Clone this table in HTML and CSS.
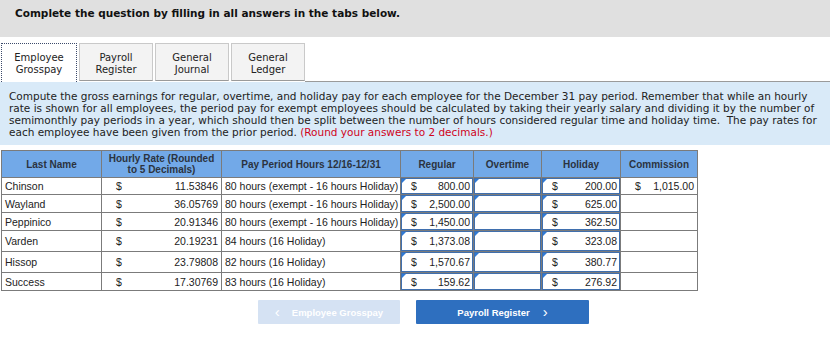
FILE: index.html
```html
<!DOCTYPE html>
<html>
<head>
<meta charset="utf-8">
<title>Employee Grosspay</title>
<link rel="stylesheet" href="styles.css">
</head>
<body>
<div class="prompt">Complete the question by filling in all answers in the tabs below.</div>

<div class="tabs">
  <div class="tab active">Employee<br>Grosspay</div>
  <div class="tab">Payroll<br>Register</div>
  <div class="tab">General<br>Journal</div>
  <div class="tab">General<br>Ledger</div>
  <div class="tab-rest"></div>
</div>

<div class="instructions">
  Compute the gross earnings for regular, overtime, and holiday pay for each employee for the December 31 pay period. Remember that while an hourly rate is shown for all employees, the period pay for exempt employees should be calculated by taking their yearly salary and dividing it by the number of semimonthly pay periods in a year, which should then be split between the number of hours considered regular time and holiday time.&nbsp; The pay rates for each employee have been given from the prior period. <span class="note">(Round your answers to 2 decimals.)</span>
</div>

<table class="grid">
  <colgroup>
    <col class="c-name"><col class="c-rate"><col class="c-hours"><col class="c-reg"><col class="c-ot"><col class="c-hol"><col class="c-com">
  </colgroup>
  <thead>
    <tr>
      <th>Last Name</th>
      <th class="two">Hourly Rate (Rounded<br>to 5 Decimals)</th>
      <th>Pay Period Hours 12/16-12/31</th>
      <th>Regular</th>
      <th>Overtime</th>
      <th>Holiday</th>
      <th>Commission</th>
    </tr>
  </thead>
  <tbody>
    <tr class="r-short">
      <td>Chinson</td>
      <td><div class="money"><span>$</span><span>11.53846</span></div></td>
      <td>80 hours (exempt - 16 hours Holiday)</td>
      <td class="in"><div class="inp money"><span>$</span><span>800.00</span></div></td>
      <td class="in"><div class="inp"></div></td>
      <td class="in"><div class="inp money"><span>$</span><span>200.00</span></div></td>
      <td><div class="money"><span>$</span><span>1,015.00</span></div></td>
    </tr>
    <tr>
      <td>Wayland</td>
      <td><div class="money"><span>$</span><span>36.05769</span></div></td>
      <td>80 hours (exempt - 16 hours Holiday)</td>
      <td class="in"><div class="inp money"><span>$</span><span>2,500.00</span></div></td>
      <td class="in"><div class="inp"></div></td>
      <td class="in"><div class="inp money"><span>$</span><span>625.00</span></div></td>
      <td></td>
    </tr>
    <tr>
      <td>Peppinico</td>
      <td><div class="money"><span>$</span><span>20.91346</span></div></td>
      <td>80 hours (exempt - 16 hours Holiday)</td>
      <td class="in"><div class="inp money"><span>$</span><span>1,450.00</span></div></td>
      <td class="in"><div class="inp"></div></td>
      <td class="in"><div class="inp money"><span>$</span><span>362.50</span></div></td>
      <td></td>
    </tr>
    <tr class="r-tall">
      <td>Varden</td>
      <td><div class="money"><span>$</span><span>20.19231</span></div></td>
      <td>84 hours (16 Holiday)</td>
      <td class="in"><div class="inp money"><span>$</span><span>1,373.08</span></div></td>
      <td class="in"><div class="inp"></div></td>
      <td class="in"><div class="inp money"><span>$</span><span>323.08</span></div></td>
      <td></td>
    </tr>
    <tr class="r-tall">
      <td>Hissop</td>
      <td><div class="money"><span>$</span><span>23.79808</span></div></td>
      <td>82 hours (16 Holiday)</td>
      <td class="in"><div class="inp money"><span>$</span><span>1,570.67</span></div></td>
      <td class="in"><div class="inp"></div></td>
      <td class="in"><div class="inp money"><span>$</span><span>380.77</span></div></td>
      <td></td>
    </tr>
    <tr>
      <td>Success</td>
      <td><div class="money"><span>$</span><span>17.30769</span></div></td>
      <td>83 hours (16 Holiday)</td>
      <td class="in"><div class="inp money"><span>$</span><span>159.62</span></div></td>
      <td class="in"><div class="inp"></div></td>
      <td class="in"><div class="inp money"><span>$</span><span>276.92</span></div></td>
      <td></td>
    </tr>
  </tbody>
</table>

<div class="nav">
  <div class="btn prev"><span class="chev">&lsaquo;</span>Employee Grosspay</div>
  <div class="btn next">Payroll Register<span class="chev">&rsaquo;</span></div>
</div>
</body>
</html>
```

FILE: styles.css
```css
html, body {
  margin: 0;
  padding: 0;
  background: #fff;
}

body {
  width: 839px;
  color: #222;
  font-family: "DejaVu Sans", Verdana, sans-serif;
}

/* grey question banner */
.prompt {
  width: 830px;
  height: 37px;
  box-sizing: border-box;
  padding: 7px 0 0 15px;
  background: #e0e0e0;
  font-size: 10.5px;
  font-weight: bold;
  color: #111;
}

/* tab strip */
.tabs {
  display: flex;
  width: 830px;
  margin-top: 6px;
  padding-left: 1px;
  box-sizing: border-box;
  height: 39px;
}

.tab {
  width: 74px;
  height: 38px;
  box-sizing: border-box;
  margin-right: 2px;
  padding-top: 8px;
  background: #f3f3f3;
  border: 1px solid #c9c9c9;
  border-bottom-color: #9a9a9a;
  text-align: center;
  font-size: 10px;
  line-height: 12px;
  color: #222;
}

.tab.active {
  width: 76px;
  height: 39px;
  background: #fff;
  border: 1px dotted #3b4a6b;
  border-bottom: none;
}

.tab-rest {
  flex: 1;
  border-bottom: 1px solid #9a9a9a;
  margin-left: -2px;
}

/* instructions panel */
.instructions {
  width: 830px;
  box-sizing: border-box;
  padding: 8px 9px 7px 9px;
  background: #d9eaf8;
  font-size: 10.5px;
  line-height: 12px;
  color: #222;
}

.note {
  color: #d0021b;
}

/* answer grid */
.grid {
  margin: 5px 0 0 1px;
  border-collapse: collapse;
  font-family: "Liberation Sans", Arial, sans-serif;
  font-size: 10.5px;
  color: #222;
  table-layout: fixed;
  width: 696px;
}

.c-name { width: 100px; }
.c-rate { width: 120px; }
.c-hours { width: 179px; }
.c-reg { width: 73px; }
.c-ot { width: 68px; }
.c-hol { width: 79px; }
.c-com { width: 77px; }

.grid th {
  height: 26px;
  padding: 0;
  background: #72a9e8;
  border: 1px solid #7b7b7b;
  font-weight: bold;
  font-size: 10px;
  line-height: 11px;
  color: #2b3340;
}

.grid td {
  height: 17px;
  padding: 0 3px;
  border: 1px solid #7b7b7b;
  white-space: nowrap;
  line-height: 12px;
}

.grid tr.r-tall td {
  height: 20px;
}

.grid tr.r-short td {
  height: 16px;
}

.money {
  display: flex;
  justify-content: space-between;
  padding-left: 11px;
}

.grid td.in {
  padding: 0;
}

.inp {
  position: relative;
  height: 100%;
  min-height: 15px;
  box-sizing: border-box;
  border: 1px solid #3f6fae;
  padding: 0 2px 0 9px;
  background: #fff;
  display: flex;
  align-items: center;
}

.inp.money {
  justify-content: space-between;
}

/* small corner marker on editable cells */
.inp::before {
  content: "";
  position: absolute;
  left: 0;
  top: 0;
  border-top: 4px solid #2f7ad6;
  border-right: 4px solid transparent;
}

/* navigation buttons */
.nav {
  display: flex;
  gap: 16px;
  padding: 9px 0 0 258px;
}

.btn {
  height: 24px;
  display: flex;
  align-items: center;
  justify-content: center;
  font-family: "Liberation Sans", Arial, sans-serif;
  font-size: 9.5px;
  font-weight: bold;
  color: #fff;
  border-radius: 1px;
}

.btn.prev {
  width: 142px;
  background: #d5e2f3;
}

.btn.next {
  width: 173px;
  background: #2e6fbf;
}

.chev {
  font-size: 15px;
  font-weight: normal;
  line-height: 1;
  margin-top: -2px;
}

.prev .chev {
  margin-right: 12px;
}

.next .chev {
  margin-left: 13px;
}
```
